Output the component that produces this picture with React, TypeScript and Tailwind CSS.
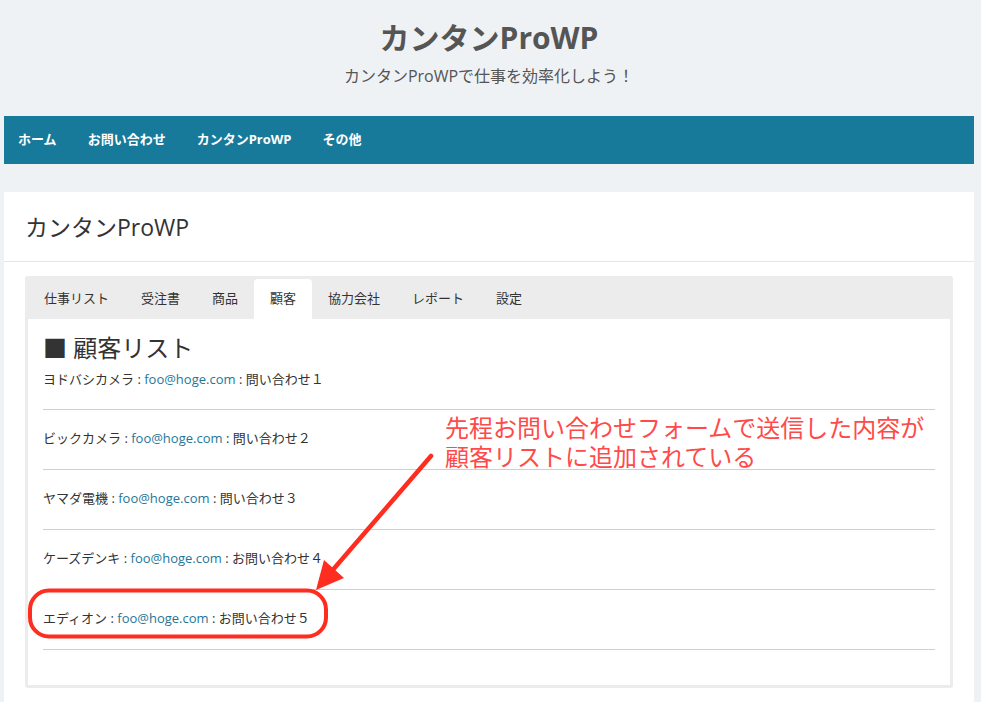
import React from "react";

const tabs = ["仕事リスト", "受注書", "商品", "顧客", "協力会社", "レポート", "設定"];

const customers = [
  { name: "ヨドバシカメラ", subject: "問い合わせ１" },
  { name: "ビックカメラ", subject: "問い合わせ２" },
  { name: "ヤマダ電機", subject: "問い合わせ３" },
  { name: "ケーズデンキ", subject: "お問い合わせ４" },
  { name: "エディオン", subject: "お問い合わせ５" },
];

const navItems = ["ホーム", "お問い合わせ", "カンタンProWP", "その他"];

function Annotation() {
  return (
    <svg
      className="pointer-events-none absolute left-0 top-0"
      width="981"
      height="702"
      viewBox="0 0 981 702"
    >
      <line x1="431" y1="456" x2="331" y2="572" stroke="#ff2d1f" strokeWidth="4.5" strokeLinecap="round" />
      <polygon points="316,590 344,578 324,560" fill="#ff2d1f" />
      <rect x="30" y="590.5" width="296" height="46" rx="19" fill="none" stroke="#ff2d1f" strokeWidth="4" />
    </svg>
  );
}

export default function App() {
  return (
    <div
      className="relative min-h-screen bg-[#eef2f5] pl-[4px] pr-[7px] text-[#333]"
      style={{ fontFamily: '"Open Sans", "Noto Sans CJK JP", sans-serif' }}
    >
      <header className="flex flex-col items-center pt-[16px] pb-[28px]">
        <h1 className="text-[30px] font-bold leading-[44px] text-[#555]">カンタンProWP</h1>
        <p className="mt-[4px] text-[16px] leading-[24px] text-[#555]">カンタンProWPで仕事を効率化しよう！</p>
      </header>

      <nav className="flex h-[48px] items-center gap-[31px] bg-[#187a9b] pl-[14px]">
        {navItems.map((item) => (
          <span key={item} className="text-[13px] font-bold text-white">
            {item}
          </span>
        ))}
      </nav>

      <main className="mt-[28px] bg-white">
        <div className="flex h-[70px] items-center border-b border-[#e6e6e6] px-[21px]">
          <h2 className="text-[23px] leading-[32px] text-[#333]">カンタンProWP</h2>
        </div>

        <div className="px-[21px] pt-[14px] pb-[20px]">
          <div className="rounded-[3px] border-[3px] border-[#ececec] bg-[#ececec]">
            <div className="flex h-[40px] items-end">
              {tabs.map((t) => (
                <div
                  key={t}
                  className={
                    t === "顧客"
                      ? "flex h-[40px] items-center rounded-t-[4px] bg-white px-4 text-[13px] text-[#333]"
                      : "flex h-[40px] items-center px-4 text-[13px] text-[#333]"
                  }
                >
                  {t}
                </div>
              ))}
            </div>

            <div className="bg-white px-[15px] pt-[13px] pb-[35px]">
              <h3 className="text-[24px] leading-[32px] text-[#333]">■ 顧客リスト</h3>
              <ul>
                {customers.map((c, i) => (
                  <li
                    key={c.name}
                    className={
                      i === 0
                        ? "border-b border-[#cfcfcf] pt-[5px] pb-[20px] text-[13px] leading-[20px]"
                        : "border-b border-[#cfcfcf] pt-[18px] pb-[21px] text-[13px] leading-[20px]"
                    }
                  >
                    {c.name} : <span className="text-[#1f7699]">foo@hoge.com</span> : {c.subject}
                  </li>
                ))}
              </ul>
            </div>
          </div>
        </div>
      </main>

      <div className="pointer-events-none absolute left-[445px] top-[413px] text-[24px] leading-[29px] text-[#ff4a4a]">
        先程お問い合わせフォームで送信した内容が
        <br />
        顧客リストに追加されている
      </div>

      <Annotation />
    </div>
  );
}
